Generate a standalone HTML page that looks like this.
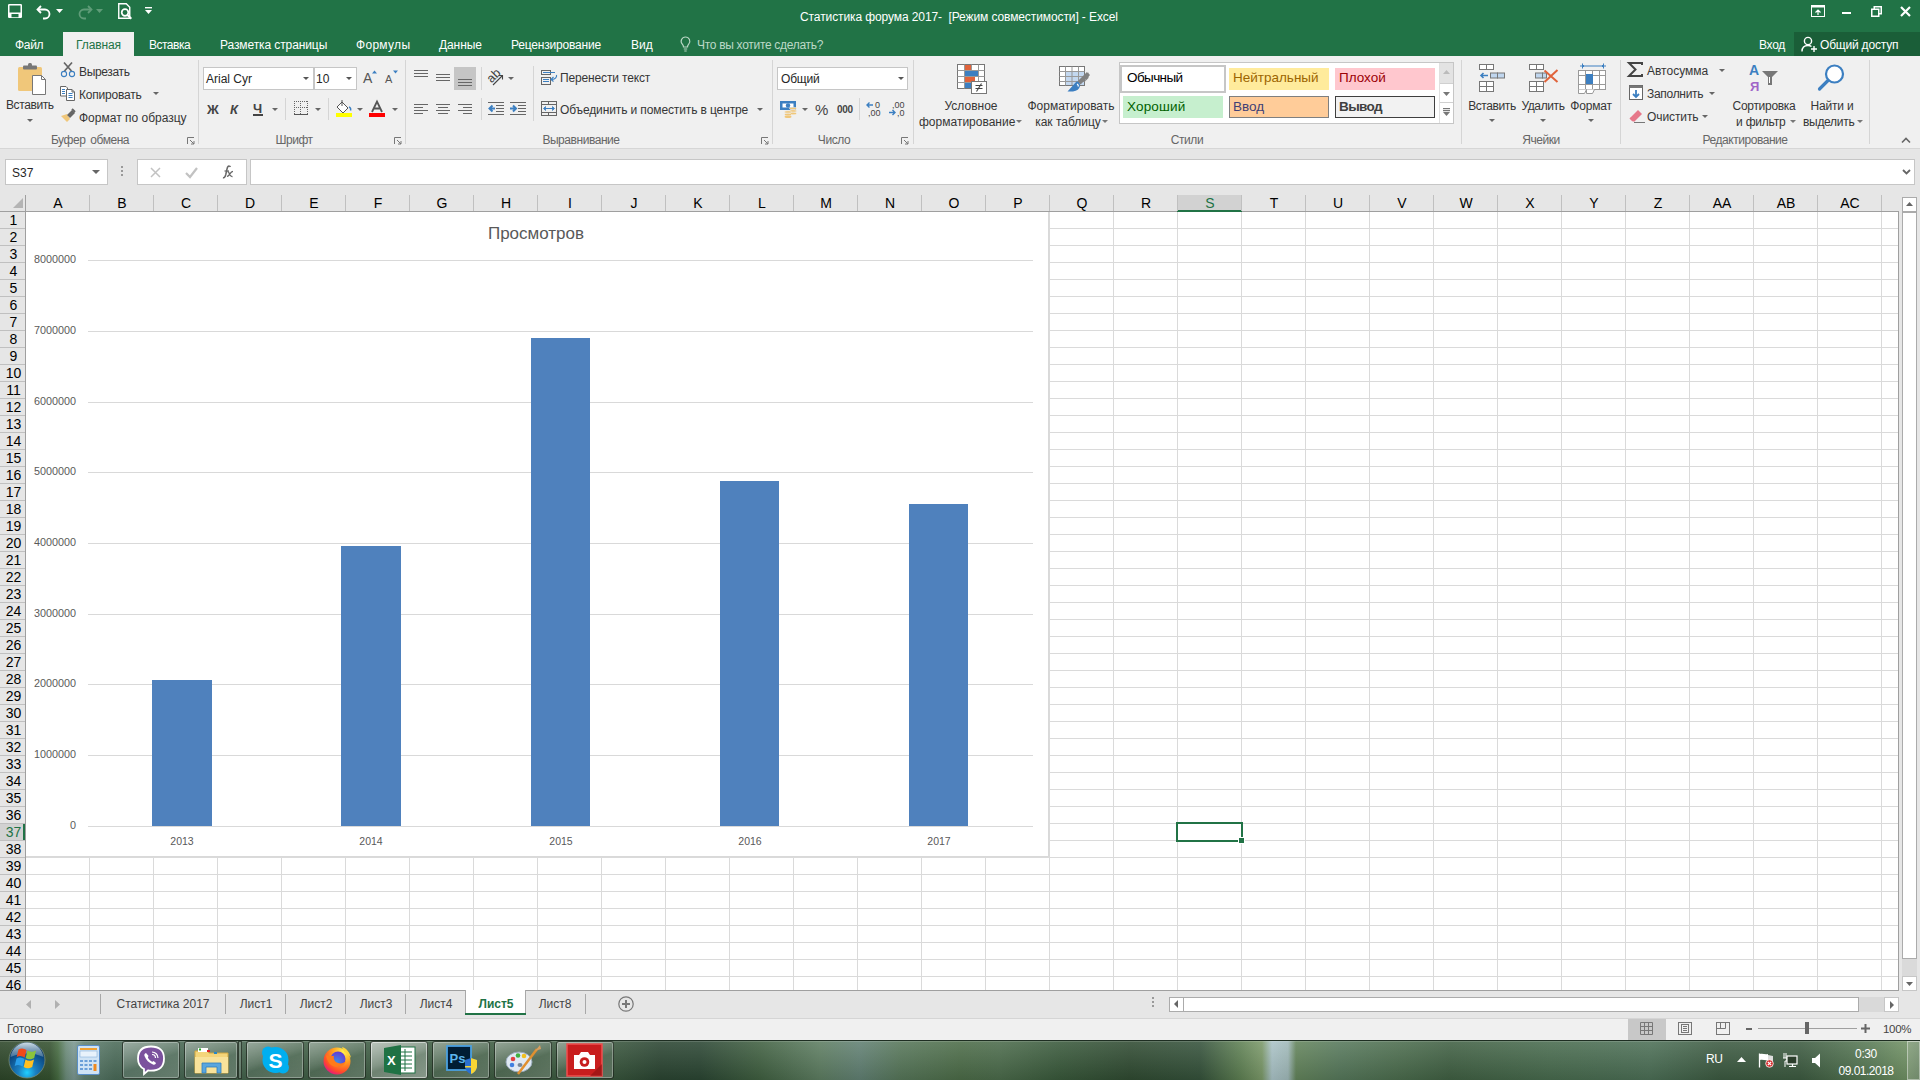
<!DOCTYPE html>
<html><head><meta charset="utf-8"><style>
*{margin:0;padding:0;box-sizing:border-box}
html,body{width:1920px;height:1080px;overflow:hidden;background:#f0f0f0;font-family:"Liberation Sans",sans-serif}
.a{position:absolute}
.t{position:absolute;white-space:pre;line-height:1.15}
svg{overflow:visible}
</style></head><body>
<div class="a" style="left:0px;top:0px;width:1920px;height:56px;background:#217346"></div>
<svg class="a" style="left:8px;top:4px" width="14" height="14" viewBox="0 0 14 14"><rect x="0.75" y="0.75" width="12.5" height="12.5" fill="none" stroke="#fff" stroke-width="1.5" rx="0.5"/><rect x="0.75" y="8.5" width="12.5" height="4.75" fill="#fff"/><rect x="3.5" y="10" width="7" height="3.25" fill="#217346"/></svg>
<svg class="a" style="left:36px;top:4px" width="16" height="14" viewBox="0 0 16 14"><path d="M5 2 L1.5 5.5 L5 9" fill="none" stroke="#fff" stroke-width="1.8"/><path d="M2 5.5 H9 A4.5 4.5 0 0 1 9 14.5 H7" fill="none" stroke="#fff" stroke-width="1.8"/></svg>
<svg class="a" style="left:56px;top:9px" width="7" height="4" viewBox="0 0 7 4"><path d="M0 0h7l-3.5 4z" fill="#fff"/></svg>
<svg class="a" style="left:77px;top:4px" width="16" height="14" viewBox="0 0 16 14"><path d="M11 2 L14.5 5.5 L11 9" fill="none" stroke="#5f9c78" stroke-width="1.8"/><path d="M14 5.5 H7 A4.5 4.5 0 0 0 7 14.5 H9" fill="none" stroke="#5f9c78" stroke-width="1.8"/></svg>
<svg class="a" style="left:96px;top:9px" width="7" height="4" viewBox="0 0 7 4"><path d="M0 0h7l-3.5 4z" fill="#5f9c78"/></svg>
<svg class="a" style="left:118px;top:3px" width="15" height="17" viewBox="0 0 15 17"><path d="M0.75 0.75h7.5l3.5 3.5v11H0.75z" fill="none" stroke="#fff" stroke-width="1.4"/><circle cx="7" cy="9.5" r="3.3" fill="none" stroke="#fff" stroke-width="1.7"/><path d="M9.3 11.8l4 4" stroke="#fff" stroke-width="2"/></svg>
<svg class="a" style="left:145px;top:7px" width="7" height="9" viewBox="0 0 7 9"><rect x="0" y="0" width="7" height="1.4" fill="#fff"/><path d="M0 3h7l-3.5 4z" fill="#fff"/></svg>
<div class="t" style="left:800px;top:11px;font-size:12px;color:#fff;font-weight:normal;letter-spacing:-0.1px">Статистика форума 2017-  [Режим совместимости] - Excel</div>
<svg class="a" style="left:1811px;top:5px" width="14" height="12" viewBox="0 0 14 12"><rect x="0.5" y="0.5" width="13" height="11" fill="none" stroke="#fff"/><rect x="0.5" y="0.5" width="13" height="2" fill="#fff"/><path d="M7 10V5M4.5 7.5L7 5l2.5 2.5" fill="none" stroke="#fff" stroke-width="1.2"/></svg>
<div class="a" style="left:1842px;top:12px;width:9px;height:2px;background:#fff"></div>
<svg class="a" style="left:1871px;top:6px" width="11" height="11" viewBox="0 0 11 11"><rect x="0.75" y="3.25" width="7" height="7" fill="none" stroke="#fff" stroke-width="1.5"/><path d="M3.25 3.25V0.75h7v7H7.75" fill="none" stroke="#fff" stroke-width="1.5"/></svg>
<svg class="a" style="left:1900px;top:6px" width="11" height="11" viewBox="0 0 11 11"><path d="M1 1l9 9M10 1L1 10" stroke="#fff" stroke-width="2.2"/></svg>
<div class="a" style="left:63px;top:32px;width:71px;height:24px;background:#f0f0f0"></div>
<div class="t" style="left:15px;top:39px;font-size:12px;color:#fff;font-weight:normal;letter-spacing:-0.3px">Файл</div>
<div class="t" style="left:76px;top:39px;font-size:12px;color:#217346;font-weight:normal;letter-spacing:-0.1px">Главная</div>
<div class="t" style="left:149px;top:39px;font-size:12px;color:#fff;font-weight:normal;letter-spacing:-0.5px">Вставка</div>
<div class="t" style="left:220px;top:39px;font-size:12px;color:#fff;font-weight:normal;letter-spacing:-0.1px">Разметка страницы</div>
<div class="t" style="left:356px;top:39px;font-size:12px;color:#fff;font-weight:normal;letter-spacing:0.3px">Формулы</div>
<div class="t" style="left:439px;top:39px;font-size:12px;color:#fff;font-weight:normal;letter-spacing:-0.1px">Данные</div>
<div class="t" style="left:511px;top:39px;font-size:12px;color:#fff;font-weight:normal;letter-spacing:-0.2px">Рецензирование</div>
<div class="t" style="left:631px;top:39px;font-size:12px;color:#fff;font-weight:normal;">Вид</div>
<svg class="a" style="left:680px;top:36px" width="11" height="16" viewBox="0 0 11 16"><path d="M5.5 1A4.3 4.3 0 0 0 2.3 8.2C3.3 9.4 3.5 10 3.5 11h4c0-1 .2-1.6 1.2-2.8A4.3 4.3 0 0 0 5.5 1z" fill="none" stroke="#b9d6c4" stroke-width="1.2"/><path d="M3.8 13h3.4M4.3 15h2.4" stroke="#b9d6c4" stroke-width="1.2"/></svg>
<div class="t" style="left:697px;top:39px;font-size:12px;color:#bcd9c7;font-weight:normal;letter-spacing:-0.3px">Что вы хотите сделать?</div>
<div class="t" style="left:1759px;top:39px;font-size:12px;color:#fff;font-weight:normal;letter-spacing:-0.3px">Вход</div>
<div class="a" style="left:1794px;top:32px;width:126px;height:24px;background:#1a5e38"></div>
<svg class="a" style="left:1801px;top:36px" width="17" height="17" viewBox="0 0 17 17"><circle cx="7" cy="5" r="3.6" fill="none" stroke="#fff" stroke-width="1.4"/><path d="M1 15.5c0-4 2.6-6 6-6 1.4 0 2.6.3 3.5 1" fill="none" stroke="#fff" stroke-width="1.4"/><path d="M13 10v6M10 13h6" stroke="#fff" stroke-width="1.4"/></svg>
<div class="t" style="left:1820px;top:39px;font-size:12px;color:#fff;font-weight:normal;letter-spacing:-0.2px">Общий доступ</div>
<div class="a" style="left:0px;top:56px;width:1920px;height:92px;background:#f0f0f0"></div>
<div class="a" style="left:0px;top:148px;width:1920px;height:1px;background:#d6d6d6"></div>
<svg class="a" style="left:17px;top:63px" width="30" height="32" viewBox="0 0 30 32"><rect x="1" y="4" width="24" height="24" rx="1.5" fill="#f0c77a"/><rect x="6" y="2.5" width="14" height="4" rx="1" fill="#777"/><rect x="11" y="0" width="4" height="4" rx="1.5" fill="#777"/><path d="M15.5 12.5h9l4 4v15h-13z" fill="#fff" stroke="#777" stroke-width="1"/><path d="M24.5 12.5v4h4" fill="none" stroke="#777"/></svg>
<div class="t" style="left:6px;top:99px;font-size:12px;color:#363636;font-weight:normal;letter-spacing:-0.4px">Вставить</div>
<svg class="a" style="left:27px;top:119px" width="6" height="3" viewBox="0 0 6 3"><path d="M0 0h6l-3 3z" fill="#666"/></svg>
<svg class="a" style="left:60px;top:61px" width="16" height="17" viewBox="0 0 16 17"><path d="M4 1.5L11.5 10M12 1.5L4.5 10" stroke="#666" stroke-width="1.7"/><circle cx="4" cy="13" r="2.6" fill="none" stroke="#3c7fc1" stroke-width="1.1"/><circle cx="12" cy="13" r="2.6" fill="none" stroke="#3c7fc1" stroke-width="1.1"/></svg>
<div class="t" style="left:79px;top:66px;font-size:12px;color:#363636;font-weight:normal;letter-spacing:-0.35px">Вырезать</div>
<svg class="a" style="left:60px;top:86px" width="16" height="15" viewBox="0 0 16 15"><path d="M0.5 0.5h5.5l1.5 1.5v8H0.5z" fill="#fff" stroke="#666"/><path d="M6.5 3.5h5.5l2.5 2.5v8.5H6.5z" fill="#fff" stroke="#666"/><path d="M12 3.5v2.5h2.5" fill="none" stroke="#666"/><path d="M2 3.5h3M2 5.5h3M2 7.5h3" stroke="#3c7fc1"/><path d="M8.5 7.5h4M8.5 9.5h4M8.5 11.5h4" stroke="#3c7fc1"/></svg>
<div class="t" style="left:79px;top:89px;font-size:12px;color:#363636;font-weight:normal;letter-spacing:-0.2px">Копировать</div>
<svg class="a" style="left:153px;top:92px" width="6" height="3" viewBox="0 0 6 3"><path d="M0 0h6l-3 3z" fill="#666"/></svg>
<svg class="a" style="left:60px;top:108px" width="17" height="15" viewBox="0 0 17 15"><path d="M1 8l6 6 3-3-3-5z" fill="#f0c77a"/><path d="M7 7l3 3 5-5-3-3z" fill="#666"/><path d="M12 1l3 3" stroke="#666" stroke-width="2"/></svg>
<div class="t" style="left:79px;top:112px;font-size:12px;color:#363636;font-weight:normal;">Формат по образцу</div>
<div class="t" style="left:-110px;width:400px;text-align:center;top:134px;font-size:12px;color:#666;font-weight:normal;letter-spacing:-0.45px;word-spacing:2px">Буфер обмена</div>
<svg class="a" style="left:187px;top:137px" width="8" height="8" viewBox="0 0 8 8"><path d="M0.5 7V0.5H7" fill="none" stroke="#777"/><path d="M3 3l4 4M7 4v3H4" fill="none" stroke="#777"/></svg>
<div class="a" style="left:198px;top:60px;width:1px;height:84px;background:#d5d5d5"></div>
<div class="a" style="left:203px;top:67px;width:111px;height:23px;background:#fff;border:1px solid #c6c6c6"></div>
<div class="t" style="left:206px;top:73px;font-size:12px;color:#262626;font-weight:normal;letter-spacing:0px">Arial Cyr</div>
<svg class="a" style="left:303px;top:77px" width="6" height="3" viewBox="0 0 6 3"><path d="M0 0h6l-3 3z" fill="#555"/></svg>
<div class="a" style="left:314px;top:67px;width:43px;height:23px;background:#fff;border:1px solid #c6c6c6"></div>
<div class="t" style="left:316px;top:73px;font-size:12px;color:#262626;font-weight:normal;">10</div>
<svg class="a" style="left:346px;top:77px" width="6" height="3" viewBox="0 0 6 3"><path d="M0 0h6l-3 3z" fill="#555"/></svg>
<svg class="a" style="left:363px;top:70px" width="14" height="14" viewBox="0 0 14 14"><text x="0" y="13" font-family="Liberation Sans" font-size="14" fill="#555">A</text><path d="M9 3.5l2.5-3 2.5 3z" fill="#3c7fc1"/></svg>
<svg class="a" style="left:385px;top:70px" width="14" height="14" viewBox="0 0 14 14"><text x="0" y="13" font-family="Liberation Sans" font-size="11" fill="#555">A</text><path d="M8 0.5h5l-2.5 3z" fill="#3c7fc1"/></svg>
<div class="t" style="left:207px;top:103px;font-size:13px;color:#444;font-weight:bold;">Ж</div>
<div class="t" style="left:230px;top:103px;font-size:13px;color:#444;font-weight:bold;font-style:italic">К</div>
<div class="t" style="left:253px;top:102px;font-size:13px;color:#444;font-weight:bold;">Ч</div>
<div class="a" style="left:253px;top:114px;width:10px;height:1.5px;background:#444"></div>
<svg class="a" style="left:272px;top:108px" width="6" height="3" viewBox="0 0 6 3"><path d="M0 0h6l-3 3z" fill="#666"/></svg>
<div class="a" style="left:285px;top:98px;width:1px;height:22px;background:#d5d5d5"></div>
<svg class="a" style="left:294px;top:101px" width="14" height="14" viewBox="0 0 14 14"><path d="M0 0.5h14M0 6.5h14M0.5 0v13M6.5 0v13M13.5 0v13" stroke="#666" stroke-dasharray="1 1" fill="none"/><path d="M0 13.5h14" stroke="#555" stroke-width="1"/></svg>
<svg class="a" style="left:315px;top:108px" width="6" height="3" viewBox="0 0 6 3"><path d="M0 0h6l-3 3z" fill="#666"/></svg>
<div class="a" style="left:328px;top:98px;width:1px;height:22px;background:#d5d5d5"></div>
<svg class="a" style="left:336px;top:100px" width="18" height="17" viewBox="0 0 18 17"><path d="M6 2l6 6-5 5-6-6z" fill="#fff" stroke="#555"/><path d="M6 0v6" stroke="#555"/><path d="M13 7c1.5 0.5 2 2 1.5 3.5" fill="none" stroke="#3c7fc1" stroke-width="1.5"/><rect x="0" y="13" width="16" height="4" fill="#ffff00"/></svg>
<svg class="a" style="left:357px;top:108px" width="6" height="3" viewBox="0 0 6 3"><path d="M0 0h6l-3 3z" fill="#666"/></svg>
<svg class="a" style="left:369px;top:101px" width="16" height="16" viewBox="0 0 16 16"><path d="M3 11L8 0.5 13 11M5 7.5h6" fill="none" stroke="#555" stroke-width="1.8"/><rect x="0" y="12" width="16" height="4" fill="#f00"/></svg>
<svg class="a" style="left:392px;top:108px" width="6" height="3" viewBox="0 0 6 3"><path d="M0 0h6l-3 3z" fill="#666"/></svg>
<div class="t" style="left:94px;width:400px;text-align:center;top:134px;font-size:12px;color:#666;font-weight:normal;letter-spacing:-0.45px;word-spacing:2px">Шрифт</div>
<svg class="a" style="left:394px;top:137px" width="8" height="8" viewBox="0 0 8 8"><path d="M0.5 7V0.5H7" fill="none" stroke="#777"/><path d="M3 3l4 4M7 4v3H4" fill="none" stroke="#777"/></svg>
<div class="a" style="left:405px;top:60px;width:1px;height:84px;background:#d5d5d5"></div>
<svg class="a" style="left:414px;top:70px" width="16" height="9" viewBox="0 0 16 9"><rect x="0" y="0" width="14" height="1" fill="#666"/><rect x="0" y="3" width="14" height="1" fill="#666"/><rect x="0" y="6" width="14" height="1" fill="#666"/></svg>
<svg class="a" style="left:436px;top:74px" width="16" height="9" viewBox="0 0 16 9"><rect x="0" y="0" width="14" height="1" fill="#666"/><rect x="0" y="3" width="14" height="1" fill="#666"/><rect x="0" y="6" width="14" height="1" fill="#666"/></svg>
<div class="a" style="left:454px;top:67px;width:22px;height:23px;background:#c5c5c5"></div>
<svg class="a" style="left:458px;top:79px" width="16" height="9" viewBox="0 0 16 9"><rect x="0" y="0" width="14" height="1" fill="#666"/><rect x="0" y="3" width="14" height="1" fill="#666"/><rect x="0" y="6" width="14" height="1" fill="#666"/></svg>
<div class="a" style="left:481px;top:67px;width:1px;height:23px;background:#d5d5d5"></div>
<svg class="a" style="left:487px;top:69px" width="18" height="18" viewBox="0 0 18 18"><text x="0" y="0" font-family="Liberation Sans" font-size="12.5" fill="#444" transform="translate(4.5,14.5) rotate(-45)">ab</text><path d="M6 16L15 7" stroke="#444" stroke-width="1.1"/><path d="M11.5 6.5H15.5V10.5" fill="none" stroke="#444" stroke-width="1.1"/></svg>
<svg class="a" style="left:508px;top:77px" width="6" height="3" viewBox="0 0 6 3"><path d="M0 0h6l-3 3z" fill="#666"/></svg>
<svg class="a" style="left:414px;top:104px" width="16" height="12" viewBox="0 0 16 12"><rect x="0" y="0" width="14" height="1" fill="#666"/><rect x="0" y="3" width="9" height="1" fill="#666"/><rect x="0" y="6" width="14" height="1" fill="#666"/><rect x="0" y="9" width="9" height="1" fill="#666"/></svg>
<svg class="a" style="left:436px;top:104px" width="16" height="12" viewBox="0 0 16 12"><rect x="0" y="0" width="14" height="1" fill="#666"/><rect x="2" y="3" width="10" height="1" fill="#666"/><rect x="0" y="6" width="14" height="1" fill="#666"/><rect x="2" y="9" width="10" height="1" fill="#666"/></svg>
<svg class="a" style="left:458px;top:104px" width="16" height="12" viewBox="0 0 16 12"><rect x="0" y="0" width="14" height="1" fill="#666"/><rect x="5" y="3" width="9" height="1" fill="#666"/><rect x="0" y="6" width="14" height="1" fill="#666"/><rect x="5" y="9" width="9" height="1" fill="#666"/></svg>
<div class="a" style="left:481px;top:98px;width:1px;height:22px;background:#d5d5d5"></div>
<svg class="a" style="left:488px;top:102px" width="16" height="14" viewBox="0 0 16 14"><path d="M0 0.5h16M8 3.5h8M8 6.5h8M8 9.5h8M0 12.5h16" stroke="#666"/><path d="M7 6.5H2M4.5 3.5L1.5 6.5l3 3" fill="none" stroke="#3c7fc1" stroke-width="2"/></svg>
<svg class="a" style="left:510px;top:102px" width="16" height="14" viewBox="0 0 16 14"><path d="M0 0.5h16M8 3.5h8M8 6.5h8M8 9.5h8M0 12.5h16" stroke="#666"/><path d="M0 6.5h5M3 3.5l3 3-3 3" fill="none" stroke="#3c7fc1" stroke-width="2"/></svg>
<div class="a" style="left:533px;top:66px;width:1px;height:55px;background:#d5d5d5"></div>
<svg class="a" style="left:541px;top:69px" width="17" height="17" viewBox="0 0 17 17"><rect x="0.5" y="1.5" width="9" height="4" fill="none" stroke="#666"/><rect x="0.5" y="8.5" width="9" height="7" fill="none" stroke="#666"/><path d="M2 3.5h12M2 10.5h6M2 12.5h6" stroke="#3c7fc1"/><path d="M15.5 6c.5 2-1 4-4.5 4.5" fill="none" stroke="#3c7fc1" stroke-width="1.2"/><path d="M12.5 8l-2.5 2.5 2.5 2" fill="none" stroke="#3c7fc1" stroke-width="1.2"/></svg>
<div class="t" style="left:560px;top:72px;font-size:12px;color:#363636;font-weight:normal;letter-spacing:-0.15px">Перенести текст</div>
<svg class="a" style="left:541px;top:101px" width="16" height="16" viewBox="0 0 16 16"><rect x="0.5" y="0.5" width="15" height="14" fill="none" stroke="#666"/><path d="M0.5 3.5h15M0.5 11.5h15M7.5 0.5v3M7.5 11.5v3" stroke="#666"/><path d="M3 7.5h10" stroke="#3c7fc1"/><path d="M4.5 5.5l-2 2 2 2zM11.5 5.5l2 2-2 2z" fill="#3c7fc1" stroke="#3c7fc1" stroke-width="0.8"/></svg>
<div class="t" style="left:560px;top:104px;font-size:12px;color:#363636;font-weight:normal;letter-spacing:-0.12px">Объединить и поместить в центре</div>
<svg class="a" style="left:757px;top:108px" width="6" height="3" viewBox="0 0 6 3"><path d="M0 0h6l-3 3z" fill="#666"/></svg>
<div class="t" style="left:381px;width:400px;text-align:center;top:134px;font-size:12px;color:#666;font-weight:normal;letter-spacing:-0.45px;word-spacing:2px">Выравнивание</div>
<svg class="a" style="left:761px;top:137px" width="8" height="8" viewBox="0 0 8 8"><path d="M0.5 7V0.5H7" fill="none" stroke="#777"/><path d="M3 3l4 4M7 4v3H4" fill="none" stroke="#777"/></svg>
<div class="a" style="left:772px;top:60px;width:1px;height:84px;background:#d5d5d5"></div>
<div class="a" style="left:777px;top:67px;width:131px;height:23px;background:#fff;border:1px solid #c6c6c6"></div>
<div class="t" style="left:781px;top:73px;font-size:12px;color:#262626;font-weight:normal;letter-spacing:-0.2px">Общий</div>
<svg class="a" style="left:898px;top:77px" width="6" height="3" viewBox="0 0 6 3"><path d="M0 0h6l-3 3z" fill="#555"/></svg>
<svg class="a" style="left:780px;top:100px" width="18" height="18" viewBox="0 0 18 18"><rect x="0" y="1" width="16" height="9" fill="#3c7fc1"/><path d="M2.5 3.5h11v4h-11z" fill="#fff"/><circle cx="8" cy="5.5" r="2.2" fill="#3c7fc1"/><ellipse cx="13" cy="8.5" rx="3.5" ry="1.3" fill="#f0c77a" stroke="#f0f0f0" stroke-width="0.6"/><ellipse cx="13" cy="11" rx="3.5" ry="1.3" fill="#f0c77a" stroke="#f0f0f0" stroke-width="0.6"/><ellipse cx="13" cy="13.5" rx="3.5" ry="1.3" fill="#f0c77a" stroke="#f0f0f0" stroke-width="0.6"/><ellipse cx="8" cy="12" rx="3.5" ry="1.3" fill="#f0c77a" stroke="#f0f0f0" stroke-width="0.6"/><ellipse cx="8" cy="14.5" rx="3.5" ry="1.3" fill="#f0c77a" stroke="#f0f0f0" stroke-width="0.6"/><ellipse cx="8" cy="16.8" rx="3.5" ry="1.2" fill="#f0c77a"/></svg>
<svg class="a" style="left:802px;top:108px" width="6" height="3" viewBox="0 0 6 3"><path d="M0 0h6l-3 3z" fill="#666"/></svg>
<div class="t" style="left:815px;top:101px;font-size:15px;color:#444;font-weight:normal;">%</div>
<div class="t" style="left:837px;top:104px;font-size:10px;color:#444;font-weight:normal;letter-spacing:-0.3px;font-weight:bold">000</div>
<div class="a" style="left:859px;top:98px;width:1px;height:22px;background:#d5d5d5"></div>
<svg class="a" style="left:866px;top:101px" width="17" height="16" viewBox="0 0 17 16"><text x="9" y="7" font-family="Liberation Sans" font-size="9" fill="#444">0</text><text x="2" y="15" font-family="Liberation Sans" font-size="9" fill="#444">,00</text><path d="M1 4h6M3.5 1.5L1 4l2.5 2.5" fill="none" stroke="#3c7fc1" stroke-width="1.4"/></svg>
<svg class="a" style="left:888px;top:101px" width="17" height="16" viewBox="0 0 17 16"><text x="4" y="7" font-family="Liberation Sans" font-size="9" fill="#444">,00</text><text x="9" y="15" font-family="Liberation Sans" font-size="9" fill="#444">,0</text><path d="M1 11.5h6M4.5 9l2.5 2.5L4.5 14" fill="none" stroke="#3c7fc1" stroke-width="1.4"/></svg>
<div class="t" style="left:634px;width:400px;text-align:center;top:134px;font-size:12px;color:#666;font-weight:normal;letter-spacing:-0.45px;word-spacing:2px">Число</div>
<svg class="a" style="left:901px;top:137px" width="8" height="8" viewBox="0 0 8 8"><path d="M0.5 7V0.5H7" fill="none" stroke="#777"/><path d="M3 3l4 4M7 4v3H4" fill="none" stroke="#777"/></svg>
<div class="a" style="left:913px;top:60px;width:1px;height:84px;background:#d5d5d5"></div>
<svg class="a" style="left:957px;top:64px" width="31" height="30" viewBox="0 0 31 30"><g stroke="#777" fill="#fff"><rect x="0.5" y="0.5" width="27" height="24"/></g><path d="M0.5 6.5h27M0.5 12.5h27M0.5 18.5h27M7.5 0.5v24M14.5 0.5v24M21.5 0.5v24" stroke="#999"/><rect x="8" y="1" width="6" height="5" fill="#e0633b"/><rect x="8" y="7" width="13" height="5" fill="#3c7fc1"/><rect x="8" y="13" width="10" height="5" fill="#e0633b"/><rect x="8" y="19" width="6" height="5" fill="#3c7fc1"/><rect x="14.5" y="17.5" width="15" height="12" fill="#fff" stroke="#777"/><path d="M18.5 21.5h7M18.5 24.5h7M24.5 19.5l-5 8" stroke="#444" stroke-width="1.1"/></svg>
<div class="t" style="left:771px;width:400px;text-align:center;top:100px;font-size:12px;color:#363636;font-weight:normal;">Условное</div>
<div class="t" style="left:919px;top:116px;font-size:12px;color:#363636;font-weight:normal;">форматирование</div>
<svg class="a" style="left:1016px;top:120px" width="6" height="3" viewBox="0 0 6 3"><path d="M0 0h6l-3 3z" fill="#777"/></svg>
<svg class="a" style="left:1059px;top:66px" width="31" height="29" viewBox="0 0 31 29"><rect x="0.5" y="0.5" width="25" height="19" fill="#fff" stroke="#777"/><path d="M0.5 5.5h25M0.5 10.5h25M0.5 15.5h25M6.5 0.5v19M13 0.5v19M19.5 0.5v19" stroke="#999"/><rect x="7" y="6" width="18" height="13" fill="#bdd4ee" opacity="0.9"/><path d="M7 10.5h18M7 15.5h18M13 6v13M19.5 6v13" stroke="#999"/><path d="M29.5 7.5L20 17" stroke="#808080" stroke-width="4.5"/><path d="M29.5 6v6l-4 4z" fill="#808080"/><path d="M17.5 15.5c2 0 4 2 3.5 4.5-.5 3-3 5-7 5.5H8.5z" fill="#3c7fc1"/><path d="M18 18c1 .5 1.5 1.5 1 2.5" stroke="#fff" stroke-width="1.2" fill="none"/></svg>
<div class="t" style="left:871px;width:400px;text-align:center;top:100px;font-size:12px;color:#363636;font-weight:normal;">Форматировать</div>
<div class="t" style="left:868px;width:400px;text-align:center;top:116px;font-size:12px;color:#363636;font-weight:normal;">как таблицу</div>
<svg class="a" style="left:1102px;top:120px" width="6" height="3" viewBox="0 0 6 3"><path d="M0 0h6l-3 3z" fill="#777"/></svg>
<div class="a" style="left:1119px;top:62px;width:335px;height:62px;background:#fff;border:1px solid #c6c6c6"></div>
<div class="a" style="left:1120px;top:65px;width:106px;height:28px;background:#fff;border:2px solid #c6c6c6"></div>
<div class="t" style="left:1127px;top:70px;font-size:13.5px;color:#000;font-weight:normal;letter-spacing:-0.6px">Обычный</div>
<div class="a" style="left:1229px;top:68px;width:100px;height:22px;background:#ffeb9c"></div>
<div class="t" style="left:1233px;top:70px;font-size:13.5px;color:#9c6500;font-weight:normal;">Нейтральный</div>
<div class="a" style="left:1335px;top:68px;width:100px;height:22px;background:#ffc7ce"></div>
<div class="t" style="left:1339px;top:70px;font-size:13.5px;color:#9c0006;font-weight:normal;">Плохой</div>
<div class="a" style="left:1123px;top:96px;width:100px;height:22px;background:#c6efce"></div>
<div class="t" style="left:1127px;top:99px;font-size:13.5px;color:#006100;font-weight:normal;letter-spacing:0.15px">Хороший</div>
<div class="a" style="left:1229px;top:96px;width:100px;height:22px;background:#ffcc99;border:1px solid #7f7f7f"></div>
<div class="t" style="left:1233px;top:99px;font-size:13.5px;color:#3f3f76;font-weight:normal;">Ввод</div>
<div class="a" style="left:1335px;top:96px;width:100px;height:22px;background:#f2f2f2;border:1px solid #3f3f3f"></div>
<div class="t" style="left:1339px;top:99px;font-size:13.5px;color:#3f3f3f;font-weight:bold;letter-spacing:-0.6px">Вывод</div>
<div class="a" style="left:1439px;top:63px;width:14px;height:60px;background:#fff;border-left:1px solid #e0e0e0"></div>
<div class="a" style="left:1440px;top:63px;width:13px;height:20px;background:#e3e3e3"></div>
<svg class="a" style="left:1443px;top:70px" width="7" height="4" viewBox="0 0 7 4"><path d="M0 4h7l-3.5-4z" fill="#bbb"/></svg>
<div class="a" style="left:1440px;top:83px;width:13px;height:1px;background:#d0d0d0"></div>
<svg class="a" style="left:1443px;top:92px" width="7" height="4" viewBox="0 0 7 4"><path d="M0 0h7l-3.5 4z" fill="#777"/></svg>
<div class="a" style="left:1440px;top:102px;width:13px;height:1px;background:#d0d0d0"></div>
<svg class="a" style="left:1443px;top:108px" width="7" height="8" viewBox="0 0 7 8"><rect x="0" y="0" width="7" height="1.2" fill="#777"/><rect x="0" y="2" width="7" height="1.2" fill="#777"/><path d="M0 4h7l-3.5 4z" fill="#777"/></svg>
<div class="t" style="left:987px;width:400px;text-align:center;top:134px;font-size:12px;color:#666;font-weight:normal;letter-spacing:-0.45px;word-spacing:2px">Стили</div>
<div class="a" style="left:1461px;top:60px;width:1px;height:84px;background:#d5d5d5"></div>
<svg class="a" style="left:1479px;top:64px" width="28" height="28" viewBox="0 0 28 28"><g fill="#fff" stroke="#777"><rect x="0.5" y="0.5" width="7" height="5"/><rect x="7.5" y="0.5" width="7" height="5"/><rect x="0.5" y="17.5" width="7" height="5"/><rect x="7.5" y="17.5" width="7" height="5"/><rect x="0.5" y="22.5" width="7" height="5"/><rect x="7.5" y="22.5" width="7" height="5"/></g><g fill="#c0d6ee" stroke="#777"><rect x="11.5" y="9" width="7" height="5"/><rect x="18.5" y="9" width="7" height="5"/></g><path d="M9 11.5H2M4.5 9L2 11.5 4.5 14" fill="none" stroke="#3c7fc1" stroke-width="1.6"/></svg>
<div class="t" style="left:1292px;width:400px;text-align:center;top:100px;font-size:12px;color:#363636;font-weight:normal;letter-spacing:-0.4px">Вставить</div>
<svg class="a" style="left:1489px;top:119px" width="6" height="3" viewBox="0 0 6 3"><path d="M0 0h6l-3 3z" fill="#666"/></svg>
<svg class="a" style="left:1529px;top:64px" width="30" height="28" viewBox="0 0 30 28"><g fill="#fff" stroke="#777"><rect x="0.5" y="0.5" width="7" height="5"/><rect x="7.5" y="0.5" width="7" height="5"/><rect x="0.5" y="17.5" width="7" height="5"/><rect x="7.5" y="17.5" width="7" height="5"/><rect x="0.5" y="22.5" width="7" height="5"/><rect x="7.5" y="22.5" width="7" height="5"/></g><g fill="#c0d6ee" stroke="#777"><rect x="6.5" y="9" width="7" height="5"/><rect x="13.5" y="9" width="4" height="5"/></g></svg>
<svg class="a" style="left:1543px;top:69px" width="16" height="14" viewBox="0 0 16 14"><path d="M1.5 1.5L14.5 13M14.5 1L1.5 13" stroke="#e0633b" stroke-width="2"/></svg>
<div class="t" style="left:1343px;width:400px;text-align:center;top:100px;font-size:12px;color:#363636;font-weight:normal;letter-spacing:-0.4px">Удалить</div>
<svg class="a" style="left:1540px;top:119px" width="6" height="3" viewBox="0 0 6 3"><path d="M0 0h6l-3 3z" fill="#666"/></svg>
<svg class="a" style="left:1578px;top:63px" width="30" height="32" viewBox="0 0 30 32"><path d="M2 3h26M4.5 0.5v5M25.5 0.5v5M6 3l-2-2M6 3l-2 2M24 3l2-2M24 3l2 2" stroke="#3c7fc1" stroke-width="1"/><rect x="0.5" y="7.5" width="27" height="19" fill="#fff" stroke="#999"/><path d="M0.5 12.5h27M0.5 21.5h27M7.5 7.5v19M14.5 7.5v19M21.5 7.5v19" stroke="#999"/><rect x="8" y="11" width="7" height="10" fill="#3c7fc1"/><path d="M0.5 26.5v4h6l2-4M8.5 26.5v4h6l2-4" fill="#fff" stroke="#999"/></svg>
<div class="t" style="left:1391px;width:400px;text-align:center;top:100px;font-size:12px;color:#363636;font-weight:normal;letter-spacing:-0.2px">Формат</div>
<svg class="a" style="left:1588px;top:119px" width="6" height="3" viewBox="0 0 6 3"><path d="M0 0h6l-3 3z" fill="#666"/></svg>
<div class="t" style="left:1341px;width:400px;text-align:center;top:134px;font-size:12px;color:#666;font-weight:normal;letter-spacing:-0.45px;word-spacing:2px">Ячейки</div>
<div class="a" style="left:1620px;top:60px;width:1px;height:84px;background:#d5d5d5"></div>
<svg class="a" style="left:1628px;top:62px" width="15" height="15" viewBox="0 0 15 15"><path d="M14 3V1H1l6.5 6.5L1 14h13v-2" fill="none" stroke="#444" stroke-width="2"/></svg>
<div class="t" style="left:1647px;top:65px;font-size:12px;color:#363636;font-weight:normal;letter-spacing:0px">Автосумма</div>
<svg class="a" style="left:1719px;top:69px" width="6" height="3" viewBox="0 0 6 3"><path d="M0 0h6l-3 3z" fill="#666"/></svg>
<svg class="a" style="left:1629px;top:85px" width="15" height="15" viewBox="0 0 15 15"><rect x="0.5" y="0.5" width="13" height="14" fill="#fff" stroke="#666"/><rect x="0.5" y="0.5" width="13" height="2.5" fill="#777"/><path d="M7 5v7M4 9l3 3 3-3" fill="none" stroke="#3c7fc1" stroke-width="1.8"/></svg>
<div class="t" style="left:1647px;top:88px;font-size:12px;color:#363636;font-weight:normal;letter-spacing:-0.3px">Заполнить</div>
<svg class="a" style="left:1709px;top:92px" width="6" height="3" viewBox="0 0 6 3"><path d="M0 0h6l-3 3z" fill="#666"/></svg>
<svg class="a" style="left:1629px;top:108px" width="17" height="16" viewBox="0 0 17 16"><path d="M1 10l8-8 4 4-8 8z" fill="#e6788a"/><path d="M1 10l3 3" stroke="#e6788a" stroke-width="1.5"/><path d="M5 14.5h11" stroke="#777"/></svg>
<div class="t" style="left:1647px;top:111px;font-size:12px;color:#363636;font-weight:normal;letter-spacing:-0.1px">Очистить</div>
<svg class="a" style="left:1702px;top:115px" width="6" height="3" viewBox="0 0 6 3"><path d="M0 0h6l-3 3z" fill="#666"/></svg>
<svg class="a" style="left:1749px;top:64px" width="30" height="28" viewBox="0 0 30 28"><text x="0" y="11" font-family="Liberation Sans" font-size="14" font-weight="bold" fill="#3c7fc1">A</text><text x="1" y="27" font-family="Liberation Sans" font-size="13" font-weight="bold" fill="#a064c8">Я</text><path d="M13 7h16l-6 6v8h-4v-8z" fill="#777"/><path d="M20.5 13v6" stroke="#fff" stroke-width="1"/></svg>
<div class="t" style="left:1564px;width:400px;text-align:center;top:100px;font-size:12px;color:#363636;font-weight:normal;letter-spacing:-0.3px">Сортировка</div>
<div class="t" style="left:1736px;top:116px;font-size:12px;color:#363636;font-weight:normal;letter-spacing:-0.2px">и фильтр</div>
<svg class="a" style="left:1790px;top:120px" width="6" height="3" viewBox="0 0 6 3"><path d="M0 0h6l-3 3z" fill="#777"/></svg>
<svg class="a" style="left:1817px;top:63px" width="29" height="29" viewBox="0 0 29 29"><circle cx="17.5" cy="11" r="8.5" fill="#fff" stroke="#3c7fc1" stroke-width="2.2"/><path d="M11 17.5l-8.5 8.5" stroke="#3c7fc1" stroke-width="3.2" stroke-linecap="round"/></svg>
<div class="t" style="left:1632px;width:400px;text-align:center;top:100px;font-size:12px;color:#363636;font-weight:normal;letter-spacing:-0.2px">Найти и</div>
<div class="t" style="left:1803px;top:116px;font-size:12px;color:#363636;font-weight:normal;letter-spacing:-0.3px">выделить</div>
<svg class="a" style="left:1857px;top:120px" width="6" height="3" viewBox="0 0 6 3"><path d="M0 0h6l-3 3z" fill="#777"/></svg>
<div class="t" style="left:1545px;width:400px;text-align:center;top:134px;font-size:12px;color:#666;font-weight:normal;letter-spacing:-0.45px;word-spacing:2px">Редактирование</div>
<div class="a" style="left:1869px;top:60px;width:1px;height:84px;background:#d5d5d5"></div>
<svg class="a" style="left:1901px;top:137px" width="10" height="6" viewBox="0 0 10 6"><path d="M1 5.5L5 1.5 9 5.5" fill="none" stroke="#666" stroke-width="1.6"/></svg>
<div class="a" style="left:0px;top:149px;width:1920px;height:46px;background:#e6e6e6"></div>
<div class="a" style="left:5px;top:159px;width:103px;height:26px;background:#fff;border:1px solid #c6c6c6"></div>
<div class="t" style="left:12px;top:167px;font-size:12px;color:#262626;font-weight:normal;letter-spacing:0px">S37</div>
<svg class="a" style="left:92px;top:170px" width="8" height="4" viewBox="0 0 8 4"><path d="M0 0h8l-4 4z" fill="#666"/></svg>
<svg class="a" style="left:121px;top:166px" width="3" height="10" viewBox="0 0 3 10"><rect x="0" y="0" width="2" height="2" fill="#999"/><rect x="0" y="4" width="2" height="2" fill="#999"/><rect x="0" y="8" width="2" height="2" fill="#999"/></svg>
<div class="a" style="left:137px;top:159px;width:110px;height:26px;background:#fff;border:1px solid #c6c6c6"></div>
<svg class="a" style="left:150px;top:167px" width="11" height="11" viewBox="0 0 11 11"><path d="M1 1l9 9M10 1L1 10" stroke="#c2c2c2" stroke-width="1.5"/></svg>
<svg class="a" style="left:185px;top:167px" width="13" height="11" viewBox="0 0 13 11"><path d="M1 6l4 4 7-9" fill="none" stroke="#c2c2c2" stroke-width="2.2"/></svg>
<svg class="a" style="left:221px;top:165px" width="14" height="14" viewBox="0 0 14 14"><path d="M9.5 1.8C9 1 7.5 0.8 6.8 1.8 6.2 2.6 5.5 6 4.8 9.5 4 12.5 3.2 13 2 12.5" fill="none" stroke="#666" stroke-width="1.5"/><path d="M3.5 6h4.5" stroke="#666" stroke-width="1.2"/><path d="M6.5 6.5c1 0 1.5 1 2 2.5s1.2 2.8 3 2.5M12 6.3c-1.5 0-2.5 1.5-3.5 3S7 11.5 6 11.2" fill="none" stroke="#666" stroke-width="1.3"/></svg>
<div class="a" style="left:250px;top:159px;width:1665px;height:26px;background:#fff;border:1px solid #c6c6c6"></div>
<svg class="a" style="left:1902px;top:169px" width="9" height="6" viewBox="0 0 9 6"><path d="M1 1l3.5 3.5L8 1" fill="none" stroke="#666" stroke-width="1.8"/></svg>
<div class="a" style="left:0px;top:195px;width:1902px;height:16px;background:#e6e6e6"></div>
<div class="a" style="left:0px;top:211px;width:25px;height:779px;background:#e6e6e6"></div>
<div class="a" style="left:26px;top:212px;width:1872px;height:778px;background:#fff"></div>
<div class="a" style="left:26px;top:212px;width:1872px;height:778px;background-image:linear-gradient(to right, transparent 63px, #dadada 63px, #dadada 64px, transparent 64px),linear-gradient(to bottom, transparent 16px, #dadada 16px, #dadada 17px, transparent 17px);background-size:64px 17px;background-position:0 0"></div>
<div class="a" style="left:0px;top:211px;width:1898px;height:1px;background:#9f9f9f"></div>
<div class="a" style="left:25px;top:195px;width:1px;height:795px;background:#9f9f9f"></div>
<div class="a" style="left:1898px;top:211px;width:1px;height:780px;background:#9f9f9f"></div>
<div class="a" style="left:0px;top:990px;width:1899px;height:1px;background:#9f9f9f"></div>
<svg class="a" style="left:13px;top:198px" width="10" height="10" viewBox="0 0 10 10"><path d="M10 0V10H0z" fill="#b4b4b4"/></svg>
<div class="a" style="left:1178px;top:195px;width:63px;height:16px;background:#d2d2d2"></div>
<div class="a" style="left:1177px;top:210px;width:65px;height:2px;background:#217346"></div>
<div class="a" style="left:89px;top:195px;width:1px;height:16px;background:#c0c0c0"></div>
<div class="t" style="left:26px;top:195px;width:64px;height:16px;line-height:16px;text-align:center;font-size:14px;color:#000">A</div>
<div class="a" style="left:153px;top:195px;width:1px;height:16px;background:#c0c0c0"></div>
<div class="t" style="left:90px;top:195px;width:64px;height:16px;line-height:16px;text-align:center;font-size:14px;color:#000">B</div>
<div class="a" style="left:217px;top:195px;width:1px;height:16px;background:#c0c0c0"></div>
<div class="t" style="left:154px;top:195px;width:64px;height:16px;line-height:16px;text-align:center;font-size:14px;color:#000">C</div>
<div class="a" style="left:281px;top:195px;width:1px;height:16px;background:#c0c0c0"></div>
<div class="t" style="left:218px;top:195px;width:64px;height:16px;line-height:16px;text-align:center;font-size:14px;color:#000">D</div>
<div class="a" style="left:345px;top:195px;width:1px;height:16px;background:#c0c0c0"></div>
<div class="t" style="left:282px;top:195px;width:64px;height:16px;line-height:16px;text-align:center;font-size:14px;color:#000">E</div>
<div class="a" style="left:409px;top:195px;width:1px;height:16px;background:#c0c0c0"></div>
<div class="t" style="left:346px;top:195px;width:64px;height:16px;line-height:16px;text-align:center;font-size:14px;color:#000">F</div>
<div class="a" style="left:473px;top:195px;width:1px;height:16px;background:#c0c0c0"></div>
<div class="t" style="left:410px;top:195px;width:64px;height:16px;line-height:16px;text-align:center;font-size:14px;color:#000">G</div>
<div class="a" style="left:537px;top:195px;width:1px;height:16px;background:#c0c0c0"></div>
<div class="t" style="left:474px;top:195px;width:64px;height:16px;line-height:16px;text-align:center;font-size:14px;color:#000">H</div>
<div class="a" style="left:601px;top:195px;width:1px;height:16px;background:#c0c0c0"></div>
<div class="t" style="left:538px;top:195px;width:64px;height:16px;line-height:16px;text-align:center;font-size:14px;color:#000">I</div>
<div class="a" style="left:665px;top:195px;width:1px;height:16px;background:#c0c0c0"></div>
<div class="t" style="left:602px;top:195px;width:64px;height:16px;line-height:16px;text-align:center;font-size:14px;color:#000">J</div>
<div class="a" style="left:729px;top:195px;width:1px;height:16px;background:#c0c0c0"></div>
<div class="t" style="left:666px;top:195px;width:64px;height:16px;line-height:16px;text-align:center;font-size:14px;color:#000">K</div>
<div class="a" style="left:793px;top:195px;width:1px;height:16px;background:#c0c0c0"></div>
<div class="t" style="left:730px;top:195px;width:64px;height:16px;line-height:16px;text-align:center;font-size:14px;color:#000">L</div>
<div class="a" style="left:857px;top:195px;width:1px;height:16px;background:#c0c0c0"></div>
<div class="t" style="left:794px;top:195px;width:64px;height:16px;line-height:16px;text-align:center;font-size:14px;color:#000">M</div>
<div class="a" style="left:921px;top:195px;width:1px;height:16px;background:#c0c0c0"></div>
<div class="t" style="left:858px;top:195px;width:64px;height:16px;line-height:16px;text-align:center;font-size:14px;color:#000">N</div>
<div class="a" style="left:985px;top:195px;width:1px;height:16px;background:#c0c0c0"></div>
<div class="t" style="left:922px;top:195px;width:64px;height:16px;line-height:16px;text-align:center;font-size:14px;color:#000">O</div>
<div class="a" style="left:1049px;top:195px;width:1px;height:16px;background:#c0c0c0"></div>
<div class="t" style="left:986px;top:195px;width:64px;height:16px;line-height:16px;text-align:center;font-size:14px;color:#000">P</div>
<div class="a" style="left:1113px;top:195px;width:1px;height:16px;background:#c0c0c0"></div>
<div class="t" style="left:1050px;top:195px;width:64px;height:16px;line-height:16px;text-align:center;font-size:14px;color:#000">Q</div>
<div class="a" style="left:1177px;top:195px;width:1px;height:16px;background:#c0c0c0"></div>
<div class="t" style="left:1114px;top:195px;width:64px;height:16px;line-height:16px;text-align:center;font-size:14px;color:#000">R</div>
<div class="a" style="left:1241px;top:195px;width:1px;height:16px;background:#c0c0c0"></div>
<div class="t" style="left:1178px;top:195px;width:64px;height:16px;line-height:16px;text-align:center;font-size:14px;color:#217346">S</div>
<div class="a" style="left:1305px;top:195px;width:1px;height:16px;background:#c0c0c0"></div>
<div class="t" style="left:1242px;top:195px;width:64px;height:16px;line-height:16px;text-align:center;font-size:14px;color:#000">T</div>
<div class="a" style="left:1369px;top:195px;width:1px;height:16px;background:#c0c0c0"></div>
<div class="t" style="left:1306px;top:195px;width:64px;height:16px;line-height:16px;text-align:center;font-size:14px;color:#000">U</div>
<div class="a" style="left:1433px;top:195px;width:1px;height:16px;background:#c0c0c0"></div>
<div class="t" style="left:1370px;top:195px;width:64px;height:16px;line-height:16px;text-align:center;font-size:14px;color:#000">V</div>
<div class="a" style="left:1497px;top:195px;width:1px;height:16px;background:#c0c0c0"></div>
<div class="t" style="left:1434px;top:195px;width:64px;height:16px;line-height:16px;text-align:center;font-size:14px;color:#000">W</div>
<div class="a" style="left:1561px;top:195px;width:1px;height:16px;background:#c0c0c0"></div>
<div class="t" style="left:1498px;top:195px;width:64px;height:16px;line-height:16px;text-align:center;font-size:14px;color:#000">X</div>
<div class="a" style="left:1625px;top:195px;width:1px;height:16px;background:#c0c0c0"></div>
<div class="t" style="left:1562px;top:195px;width:64px;height:16px;line-height:16px;text-align:center;font-size:14px;color:#000">Y</div>
<div class="a" style="left:1689px;top:195px;width:1px;height:16px;background:#c0c0c0"></div>
<div class="t" style="left:1626px;top:195px;width:64px;height:16px;line-height:16px;text-align:center;font-size:14px;color:#000">Z</div>
<div class="a" style="left:1753px;top:195px;width:1px;height:16px;background:#c0c0c0"></div>
<div class="t" style="left:1690px;top:195px;width:64px;height:16px;line-height:16px;text-align:center;font-size:14px;color:#000">AA</div>
<div class="a" style="left:1817px;top:195px;width:1px;height:16px;background:#c0c0c0"></div>
<div class="t" style="left:1754px;top:195px;width:64px;height:16px;line-height:16px;text-align:center;font-size:14px;color:#000">AB</div>
<div class="a" style="left:1881px;top:195px;width:1px;height:16px;background:#c0c0c0"></div>
<div class="t" style="left:1818px;top:195px;width:64px;height:16px;line-height:16px;text-align:center;font-size:14px;color:#000">AC</div>
<div class="a" style="left:0px;top:228px;width:25px;height:1px;background:#c0c0c0"></div>
<div class="t" style="left:1px;top:212px;width:25px;height:16px;line-height:17px;text-align:center;font-size:14px;color:#000">1</div>
<div class="a" style="left:0px;top:245px;width:25px;height:1px;background:#c0c0c0"></div>
<div class="t" style="left:1px;top:229px;width:25px;height:16px;line-height:17px;text-align:center;font-size:14px;color:#000">2</div>
<div class="a" style="left:0px;top:262px;width:25px;height:1px;background:#c0c0c0"></div>
<div class="t" style="left:1px;top:246px;width:25px;height:16px;line-height:17px;text-align:center;font-size:14px;color:#000">3</div>
<div class="a" style="left:0px;top:279px;width:25px;height:1px;background:#c0c0c0"></div>
<div class="t" style="left:1px;top:263px;width:25px;height:16px;line-height:17px;text-align:center;font-size:14px;color:#000">4</div>
<div class="a" style="left:0px;top:296px;width:25px;height:1px;background:#c0c0c0"></div>
<div class="t" style="left:1px;top:280px;width:25px;height:16px;line-height:17px;text-align:center;font-size:14px;color:#000">5</div>
<div class="a" style="left:0px;top:313px;width:25px;height:1px;background:#c0c0c0"></div>
<div class="t" style="left:1px;top:297px;width:25px;height:16px;line-height:17px;text-align:center;font-size:14px;color:#000">6</div>
<div class="a" style="left:0px;top:330px;width:25px;height:1px;background:#c0c0c0"></div>
<div class="t" style="left:1px;top:314px;width:25px;height:16px;line-height:17px;text-align:center;font-size:14px;color:#000">7</div>
<div class="a" style="left:0px;top:347px;width:25px;height:1px;background:#c0c0c0"></div>
<div class="t" style="left:1px;top:331px;width:25px;height:16px;line-height:17px;text-align:center;font-size:14px;color:#000">8</div>
<div class="a" style="left:0px;top:364px;width:25px;height:1px;background:#c0c0c0"></div>
<div class="t" style="left:1px;top:348px;width:25px;height:16px;line-height:17px;text-align:center;font-size:14px;color:#000">9</div>
<div class="a" style="left:0px;top:381px;width:25px;height:1px;background:#c0c0c0"></div>
<div class="t" style="left:1px;top:365px;width:25px;height:16px;line-height:17px;text-align:center;font-size:14px;color:#000">10</div>
<div class="a" style="left:0px;top:398px;width:25px;height:1px;background:#c0c0c0"></div>
<div class="t" style="left:1px;top:382px;width:25px;height:16px;line-height:17px;text-align:center;font-size:14px;color:#000">11</div>
<div class="a" style="left:0px;top:415px;width:25px;height:1px;background:#c0c0c0"></div>
<div class="t" style="left:1px;top:399px;width:25px;height:16px;line-height:17px;text-align:center;font-size:14px;color:#000">12</div>
<div class="a" style="left:0px;top:432px;width:25px;height:1px;background:#c0c0c0"></div>
<div class="t" style="left:1px;top:416px;width:25px;height:16px;line-height:17px;text-align:center;font-size:14px;color:#000">13</div>
<div class="a" style="left:0px;top:449px;width:25px;height:1px;background:#c0c0c0"></div>
<div class="t" style="left:1px;top:433px;width:25px;height:16px;line-height:17px;text-align:center;font-size:14px;color:#000">14</div>
<div class="a" style="left:0px;top:466px;width:25px;height:1px;background:#c0c0c0"></div>
<div class="t" style="left:1px;top:450px;width:25px;height:16px;line-height:17px;text-align:center;font-size:14px;color:#000">15</div>
<div class="a" style="left:0px;top:483px;width:25px;height:1px;background:#c0c0c0"></div>
<div class="t" style="left:1px;top:467px;width:25px;height:16px;line-height:17px;text-align:center;font-size:14px;color:#000">16</div>
<div class="a" style="left:0px;top:500px;width:25px;height:1px;background:#c0c0c0"></div>
<div class="t" style="left:1px;top:484px;width:25px;height:16px;line-height:17px;text-align:center;font-size:14px;color:#000">17</div>
<div class="a" style="left:0px;top:517px;width:25px;height:1px;background:#c0c0c0"></div>
<div class="t" style="left:1px;top:501px;width:25px;height:16px;line-height:17px;text-align:center;font-size:14px;color:#000">18</div>
<div class="a" style="left:0px;top:534px;width:25px;height:1px;background:#c0c0c0"></div>
<div class="t" style="left:1px;top:518px;width:25px;height:16px;line-height:17px;text-align:center;font-size:14px;color:#000">19</div>
<div class="a" style="left:0px;top:551px;width:25px;height:1px;background:#c0c0c0"></div>
<div class="t" style="left:1px;top:535px;width:25px;height:16px;line-height:17px;text-align:center;font-size:14px;color:#000">20</div>
<div class="a" style="left:0px;top:568px;width:25px;height:1px;background:#c0c0c0"></div>
<div class="t" style="left:1px;top:552px;width:25px;height:16px;line-height:17px;text-align:center;font-size:14px;color:#000">21</div>
<div class="a" style="left:0px;top:585px;width:25px;height:1px;background:#c0c0c0"></div>
<div class="t" style="left:1px;top:569px;width:25px;height:16px;line-height:17px;text-align:center;font-size:14px;color:#000">22</div>
<div class="a" style="left:0px;top:602px;width:25px;height:1px;background:#c0c0c0"></div>
<div class="t" style="left:1px;top:586px;width:25px;height:16px;line-height:17px;text-align:center;font-size:14px;color:#000">23</div>
<div class="a" style="left:0px;top:619px;width:25px;height:1px;background:#c0c0c0"></div>
<div class="t" style="left:1px;top:603px;width:25px;height:16px;line-height:17px;text-align:center;font-size:14px;color:#000">24</div>
<div class="a" style="left:0px;top:636px;width:25px;height:1px;background:#c0c0c0"></div>
<div class="t" style="left:1px;top:620px;width:25px;height:16px;line-height:17px;text-align:center;font-size:14px;color:#000">25</div>
<div class="a" style="left:0px;top:653px;width:25px;height:1px;background:#c0c0c0"></div>
<div class="t" style="left:1px;top:637px;width:25px;height:16px;line-height:17px;text-align:center;font-size:14px;color:#000">26</div>
<div class="a" style="left:0px;top:670px;width:25px;height:1px;background:#c0c0c0"></div>
<div class="t" style="left:1px;top:654px;width:25px;height:16px;line-height:17px;text-align:center;font-size:14px;color:#000">27</div>
<div class="a" style="left:0px;top:687px;width:25px;height:1px;background:#c0c0c0"></div>
<div class="t" style="left:1px;top:671px;width:25px;height:16px;line-height:17px;text-align:center;font-size:14px;color:#000">28</div>
<div class="a" style="left:0px;top:704px;width:25px;height:1px;background:#c0c0c0"></div>
<div class="t" style="left:1px;top:688px;width:25px;height:16px;line-height:17px;text-align:center;font-size:14px;color:#000">29</div>
<div class="a" style="left:0px;top:721px;width:25px;height:1px;background:#c0c0c0"></div>
<div class="t" style="left:1px;top:705px;width:25px;height:16px;line-height:17px;text-align:center;font-size:14px;color:#000">30</div>
<div class="a" style="left:0px;top:738px;width:25px;height:1px;background:#c0c0c0"></div>
<div class="t" style="left:1px;top:722px;width:25px;height:16px;line-height:17px;text-align:center;font-size:14px;color:#000">31</div>
<div class="a" style="left:0px;top:755px;width:25px;height:1px;background:#c0c0c0"></div>
<div class="t" style="left:1px;top:739px;width:25px;height:16px;line-height:17px;text-align:center;font-size:14px;color:#000">32</div>
<div class="a" style="left:0px;top:772px;width:25px;height:1px;background:#c0c0c0"></div>
<div class="t" style="left:1px;top:756px;width:25px;height:16px;line-height:17px;text-align:center;font-size:14px;color:#000">33</div>
<div class="a" style="left:0px;top:789px;width:25px;height:1px;background:#c0c0c0"></div>
<div class="t" style="left:1px;top:773px;width:25px;height:16px;line-height:17px;text-align:center;font-size:14px;color:#000">34</div>
<div class="a" style="left:0px;top:806px;width:25px;height:1px;background:#c0c0c0"></div>
<div class="t" style="left:1px;top:790px;width:25px;height:16px;line-height:17px;text-align:center;font-size:14px;color:#000">35</div>
<div class="a" style="left:0px;top:823px;width:25px;height:1px;background:#c0c0c0"></div>
<div class="t" style="left:1px;top:807px;width:25px;height:16px;line-height:17px;text-align:center;font-size:14px;color:#000">36</div>
<div class="a" style="left:0px;top:840px;width:25px;height:1px;background:#c0c0c0"></div>
<div class="t" style="left:1px;top:824px;width:25px;height:16px;line-height:17px;text-align:center;font-size:14px;color:#217346">37</div>
<div class="a" style="left:0px;top:857px;width:25px;height:1px;background:#c0c0c0"></div>
<div class="t" style="left:1px;top:841px;width:25px;height:16px;line-height:17px;text-align:center;font-size:14px;color:#000">38</div>
<div class="a" style="left:0px;top:874px;width:25px;height:1px;background:#c0c0c0"></div>
<div class="t" style="left:1px;top:858px;width:25px;height:16px;line-height:17px;text-align:center;font-size:14px;color:#000">39</div>
<div class="a" style="left:0px;top:891px;width:25px;height:1px;background:#c0c0c0"></div>
<div class="t" style="left:1px;top:875px;width:25px;height:16px;line-height:17px;text-align:center;font-size:14px;color:#000">40</div>
<div class="a" style="left:0px;top:908px;width:25px;height:1px;background:#c0c0c0"></div>
<div class="t" style="left:1px;top:892px;width:25px;height:16px;line-height:17px;text-align:center;font-size:14px;color:#000">41</div>
<div class="a" style="left:0px;top:925px;width:25px;height:1px;background:#c0c0c0"></div>
<div class="t" style="left:1px;top:909px;width:25px;height:16px;line-height:17px;text-align:center;font-size:14px;color:#000">42</div>
<div class="a" style="left:0px;top:942px;width:25px;height:1px;background:#c0c0c0"></div>
<div class="t" style="left:1px;top:926px;width:25px;height:16px;line-height:17px;text-align:center;font-size:14px;color:#000">43</div>
<div class="a" style="left:0px;top:959px;width:25px;height:1px;background:#c0c0c0"></div>
<div class="t" style="left:1px;top:943px;width:25px;height:16px;line-height:17px;text-align:center;font-size:14px;color:#000">44</div>
<div class="a" style="left:0px;top:976px;width:25px;height:1px;background:#c0c0c0"></div>
<div class="t" style="left:1px;top:960px;width:25px;height:16px;line-height:17px;text-align:center;font-size:14px;color:#000">45</div>

<div class="t" style="left:1px;top:977px;width:25px;height:16px;line-height:17px;text-align:center;font-size:14px;color:#000">46</div>
<div class="a" style="left:0px;top:824px;width:25px;height:16px;background:#d2d2d2"></div>
<div class="t" style="left:1px;top:824px;width:25px;height:16px;line-height:17px;text-align:center;font-size:14px;color:#217346">37</div>
<div class="a" style="left:23px;top:824px;width:2px;height:16px;background:#217346"></div>
<div class="a" style="left:1176px;top:822px;width:67px;height:20px;border:2px solid #217346"></div>
<div class="a" style="left:1238px;top:837px;width:7px;height:7px;background:#217346;border:1px solid #fff"></div>
<div class="a" style="left:26px;top:212px;width:1023px;height:645px;background:#fff;border-right:1px solid #d9d9d9;border-bottom:1px solid #d9d9d9"></div>
<div class="t" style="left:336px;width:400px;text-align:center;top:224px;font-size:17px;color:#595959;font-weight:normal;">Просмотров</div>
<div class="a" style="left:88px;top:826px;width:945px;height:1px;background:#d9d9d9"></div>
<div class="t" style="left:0px;width:76px;text-align:right;top:819px;font-size:10.8px;color:#595959">0</div>
<div class="a" style="left:88px;top:755px;width:945px;height:1px;background:#d9d9d9"></div>
<div class="t" style="left:0px;width:76px;text-align:right;top:748px;font-size:10.8px;color:#595959">1000000</div>
<div class="a" style="left:88px;top:684px;width:945px;height:1px;background:#d9d9d9"></div>
<div class="t" style="left:0px;width:76px;text-align:right;top:677px;font-size:10.8px;color:#595959">2000000</div>
<div class="a" style="left:88px;top:614px;width:945px;height:1px;background:#d9d9d9"></div>
<div class="t" style="left:0px;width:76px;text-align:right;top:607px;font-size:10.8px;color:#595959">3000000</div>
<div class="a" style="left:88px;top:543px;width:945px;height:1px;background:#d9d9d9"></div>
<div class="t" style="left:0px;width:76px;text-align:right;top:536px;font-size:10.8px;color:#595959">4000000</div>
<div class="a" style="left:88px;top:472px;width:945px;height:1px;background:#d9d9d9"></div>
<div class="t" style="left:0px;width:76px;text-align:right;top:465px;font-size:10.8px;color:#595959">5000000</div>
<div class="a" style="left:88px;top:402px;width:945px;height:1px;background:#d9d9d9"></div>
<div class="t" style="left:0px;width:76px;text-align:right;top:395px;font-size:10.8px;color:#595959">6000000</div>
<div class="a" style="left:88px;top:331px;width:945px;height:1px;background:#d9d9d9"></div>
<div class="t" style="left:0px;width:76px;text-align:right;top:324px;font-size:10.8px;color:#595959">7000000</div>
<div class="a" style="left:88px;top:260px;width:945px;height:1px;background:#d9d9d9"></div>
<div class="t" style="left:0px;width:76px;text-align:right;top:253px;font-size:10.8px;color:#595959">8000000</div>
<div class="a" style="left:152px;top:680px;width:60px;height:146px;background:#4f81bd"></div>
<div class="t" style="left:-18px;width:400px;text-align:center;top:835px;font-size:10.5px;color:#595959;font-weight:normal;">2013</div>
<div class="a" style="left:341px;top:546px;width:60px;height:280px;background:#4f81bd"></div>
<div class="t" style="left:171px;width:400px;text-align:center;top:835px;font-size:10.5px;color:#595959;font-weight:normal;">2014</div>
<div class="a" style="left:531px;top:338px;width:59px;height:488px;background:#4f81bd"></div>
<div class="t" style="left:361px;width:400px;text-align:center;top:835px;font-size:10.5px;color:#595959;font-weight:normal;">2015</div>
<div class="a" style="left:720px;top:481px;width:59px;height:345px;background:#4f81bd"></div>
<div class="t" style="left:550px;width:400px;text-align:center;top:835px;font-size:10.5px;color:#595959;font-weight:normal;">2016</div>
<div class="a" style="left:909px;top:504px;width:59px;height:322px;background:#4f81bd"></div>
<div class="t" style="left:739px;width:400px;text-align:center;top:835px;font-size:10.5px;color:#595959;font-weight:normal;">2017</div>
<div class="a" style="left:1899px;top:195px;width:21px;height:796px;background:#e6e6e6"></div>
<div class="a" style="left:1902px;top:197px;width:15px;height:15px;background:#fff;border:1px solid #ababab"></div>
<svg class="a" style="left:1906px;top:202px" width="7" height="4" viewBox="0 0 7 4"><path d="M0 4h7l-3.5-4z" fill="#666"/></svg>
<div class="a" style="left:1902px;top:212px;width:15px;height:747px;background:#fff;border:1px solid #ababab"></div>
<div class="a" style="left:1902px;top:959px;width:15px;height:17px;background:#dadada"></div>
<div class="a" style="left:1902px;top:976px;width:15px;height:15px;background:#fff;border:1px solid #c6c6c6"></div>
<svg class="a" style="left:1906px;top:982px" width="7" height="4" viewBox="0 0 7 4"><path d="M0 0h7l-3.5 4z" fill="#666"/></svg>
<div class="a" style="left:0px;top:991px;width:1920px;height:27px;background:#e6e6e6"></div>
<svg class="a" style="left:26px;top:1000px" width="5" height="9" viewBox="0 0 5 9"><path d="M5 0v9L0 4.5z" fill="#b0b0b0"/></svg>
<svg class="a" style="left:55px;top:1000px" width="5" height="9" viewBox="0 0 5 9"><path d="M0 0v9l5-4.5z" fill="#b0b0b0"/></svg>
<div class="a" style="left:100px;top:994px;width:1px;height:20px;background:#a8a8a8"></div>
<div class="t" style="left:-37px;width:400px;text-align:center;top:998px;font-size:12px;color:#444;font-weight:normal;">Статистика 2017</div>
<div class="a" style="left:225px;top:994px;width:1px;height:20px;background:#a8a8a8"></div>
<div class="t" style="left:56px;width:400px;text-align:center;top:998px;font-size:12px;color:#444;font-weight:normal;">Лист1</div>
<div class="a" style="left:285px;top:994px;width:1px;height:20px;background:#a8a8a8"></div>
<div class="t" style="left:116px;width:400px;text-align:center;top:998px;font-size:12px;color:#444;font-weight:normal;">Лист2</div>
<div class="a" style="left:345px;top:994px;width:1px;height:20px;background:#a8a8a8"></div>
<div class="t" style="left:176px;width:400px;text-align:center;top:998px;font-size:12px;color:#444;font-weight:normal;">Лист3</div>
<div class="a" style="left:405px;top:994px;width:1px;height:20px;background:#a8a8a8"></div>
<div class="t" style="left:236px;width:400px;text-align:center;top:998px;font-size:12px;color:#444;font-weight:normal;">Лист4</div>
<div class="a" style="left:465px;top:990px;width:61px;height:25px;background:#fff;border-left:1px solid #a8a8a8;border-right:1px solid #a8a8a8"></div>
<div class="a" style="left:465px;top:1013px;width:61px;height:2px;background:#217346"></div>
<div class="t" style="left:296px;width:400px;text-align:center;top:998px;font-size:12px;color:#217346;font-weight:bold;">Лист5</div>
<div class="t" style="left:355px;width:400px;text-align:center;top:998px;font-size:12px;color:#444;font-weight:normal;">Лист8</div>
<div class="a" style="left:585px;top:994px;width:1px;height:20px;background:#a8a8a8"></div>
<svg class="a" style="left:618px;top:996px" width="16" height="16" viewBox="0 0 16 16"><circle cx="8" cy="8" r="7.2" fill="none" stroke="#777" stroke-width="1.2"/><path d="M8 4v8M4 8h8" stroke="#777" stroke-width="2"/></svg>
<svg class="a" style="left:1152px;top:997px" width="2" height="11" viewBox="0 0 2 11"><rect x="0" y="0" width="2" height="2" fill="#999"/><rect x="0" y="4" width="2" height="2" fill="#999"/><rect x="0" y="8" width="2" height="2" fill="#999"/></svg>
<div class="a" style="left:1169px;top:997px;width:15px;height:15px;background:#fff;border:1px solid #ababab"></div>
<svg class="a" style="left:1174px;top:1000px" width="4" height="8" viewBox="0 0 4 8"><path d="M4 0v8L0 4z" fill="#666"/></svg>
<div class="a" style="left:1183px;top:997px;width:676px;height:15px;background:#fff;border:1px solid #ababab"></div>
<div class="a" style="left:1859px;top:997px;width:25px;height:15px;background:#d9d9d9"></div>
<div class="a" style="left:1884px;top:997px;width:15px;height:15px;background:#fff;border:1px solid #c6c6c6"></div>
<svg class="a" style="left:1890px;top:1001px" width="4" height="8" viewBox="0 0 4 8"><path d="M0 0v8l4-4z" fill="#666"/></svg>
<div class="a" style="left:0px;top:1018px;width:1920px;height:1px;background:#d5d5d5"></div>
<div class="a" style="left:0px;top:1019px;width:1920px;height:21px;background:#f0f0f0"></div>
<div class="t" style="left:7px;top:1023px;font-size:12px;color:#444;font-weight:normal;letter-spacing:-0.15px">Готово</div>
<div class="a" style="left:1628px;top:1019px;width:38px;height:21px;background:#c8c8c8"></div>
<svg class="a" style="left:1640px;top:1022px" width="13" height="13" viewBox="0 0 13 13"><path d="M0.5 0.5h12v12h-12zM0.5 4.5h12M0.5 8.5h12M4.5 0.5v12M8.5 0.5v12" fill="none" stroke="#777"/></svg>
<svg class="a" style="left:1678px;top:1022px" width="14" height="13" viewBox="0 0 14 13"><rect x="0.5" y="0.5" width="13" height="12" fill="none" stroke="#777"/><rect x="3.5" y="2.5" width="7" height="8" fill="none" stroke="#777"/><path d="M5 4.5h4M5 6.5h4M5 8.5h4" stroke="#777"/></svg>
<svg class="a" style="left:1716px;top:1022px" width="14" height="13" viewBox="0 0 14 13"><rect x="0.5" y="0.5" width="13" height="12" fill="none" stroke="#777"/><path d="M0.5 6.5h9V0.5M4.5 0.5v6" fill="none" stroke="#777"/></svg>
<div class="a" style="left:1746px;top:1028px;width:6px;height:2px;background:#666"></div>
<div class="a" style="left:1758px;top:1028px;width:99px;height:1px;background:#a0a0a0"></div>
<div class="a" style="left:1805px;top:1022px;width:4px;height:12px;background:#666"></div>
<svg class="a" style="left:1861px;top:1024px" width="9" height="9" viewBox="0 0 9 9"><path d="M4.5 0v9M0 4.5h9" stroke="#666" stroke-width="2"/></svg>
<div class="t" style="left:1883px;top:1023px;font-size:11.5px;color:#444;font-weight:normal;letter-spacing:-0.3px">100%</div>
<div class="a" style="left:0px;top:1040px;width:1920px;height:40px;background:linear-gradient(90deg,#2c4528 0px,#33502e 50px,#456a40 58px,#6a8a78 66px,#7a9690 74px,#5f7f6f 84px,#4a6a58 115px,#3f5e45 300px,#3b593e 600px,#2a4431 660px,#2a4532 700px,#3f5f40 760px,#5c7c60 820px,#607f72 860px,#557558 900px,#4b6b47 960px,#4a6a4a 1000px,#38583a 1060px,#2f4a31 1130px,#34513a 1200px,#5d7f52 1240px,#7a9868 1262px,#a9c2c6 1272px,#9fb8b8 1288px,#62835a 1296px,#55775a 1340px,#4a6b4c 1400px,#3f5f42 1450px,#476a4d 1550px,#4b6e55 1650px,#3b5940 1720px,#3c5a40 1800px,#587a55 1870px,#6e8f62 1905px,#5f7f58 1920px)"></div>
<div class="a" style="left:0px;top:1040px;width:1920px;height:1px;background:#1e2e22"></div>
<div class="a" style="left:0px;top:1041px;width:1920px;height:1px;background:rgba(255,255,255,0.25)"></div>
<div class="a" style="left:0px;top:1042px;width:1920px;height:38px;background:linear-gradient(180deg,rgba(255,255,255,0.12),rgba(0,0,0,0.1))"></div>
<svg class="a" style="left:8px;top:1041px" width="38" height="38" viewBox="0 0 38 38"><defs><radialGradient id="orb" cx="50%" cy="85%" r="70%"><stop offset="0" stop-color="#20d0ff"/><stop offset="0.35" stop-color="#1a7fc0"/><stop offset="0.8" stop-color="#0d4f8a"/><stop offset="1" stop-color="#0a3a6a"/></radialGradient><linearGradient id="gls" x1="0" y1="0" x2="0" y2="1"><stop offset="0" stop-color="#d8e6ee" stop-opacity="0.95"/><stop offset="1" stop-color="#6a90b0" stop-opacity="0.6"/></linearGradient></defs><circle cx="19" cy="19" r="18" fill="url(#orb)" stroke="#7a8a70" stroke-width="0.8"/><path d="M2.5 16C4 7 11 1.5 19 1.5S34 7 35.5 16C30 13.5 25 12.5 19 12.5S8 13.5 2.5 16z" fill="url(#gls)"/><path d="M10.5 8.5c3-1.5 5.5-1 8 .5l-1.8 7.5c-2.5-1.5-5-2-8-.5z" fill="#f04a1a"/><path d="M19.5 9.5c2.5 1.5 5 2 8.5 0l-1.8 7.5c-3.5 2-6 1.5-8.5 0z" fill="#8cc43a"/><path d="M8.5 17.5c3-1.5 5.5-1 8 .5l-1.8 7.5c-2.5-1.5-5-2-8-.5z" fill="#2a9ee8"/><path d="M17.5 18.5c2.5 1.5 5 2 8.5 0l-1.8 7.5c-3.5 2-6 1.5-8.5 0z" fill="#ffc020"/></svg>
<svg class="a" style="left:77px;top:1045px" width="23" height="30" viewBox="0 0 23 30"><rect x="0.5" y="0.5" width="22" height="29" rx="1.5" fill="#cfe3f5" stroke="#5a8fc8"/><rect x="3" y="3" width="17" height="2" fill="#f0a030"/><rect x="3" y="6" width="17" height="6" fill="#e8f2fb" stroke="#7aa7d6" stroke-width="0.5"/><g fill="#6a9fd8"><rect x="3" y="15" width="3" height="2"/><rect x="7.5" y="15" width="3" height="2"/><rect x="12" y="15" width="3" height="2"/><rect x="16.5" y="15" width="3" height="2"/><rect x="3" y="19" width="3" height="2"/><rect x="7.5" y="19" width="3" height="2"/><rect x="12" y="19" width="3" height="2"/><rect x="3" y="23" width="3" height="2"/><rect x="7.5" y="23" width="3" height="2"/><rect x="12" y="23" width="3" height="2"/></g><rect x="16.5" y="19" width="3" height="7" fill="#f08a20"/></svg>
<div class="a" style="left:122px;top:1041px;width:58px;height:38px;border:1px solid rgba(20,30,20,0.7);border-radius:3px;background:linear-gradient(160deg,rgba(255,255,255,0.38) 0%,rgba(255,255,255,0.15) 45%,rgba(255,255,255,0.08) 55%,rgba(255,255,255,0.2) 100%);box-shadow:inset 0 0 0 1px rgba(255,255,255,0.3)"></div>
<div class="a" style="left:184px;top:1041px;width:54px;height:38px;border:1px solid rgba(20,30,20,0.7);border-radius:3px;background:linear-gradient(160deg,rgba(255,255,255,0.38) 0%,rgba(255,255,255,0.15) 45%,rgba(255,255,255,0.08) 55%,rgba(255,255,255,0.2) 100%);box-shadow:inset 0 0 0 1px rgba(255,255,255,0.3)"></div>
<div class="a" style="left:246px;top:1041px;width:58px;height:38px;border:1px solid rgba(20,30,20,0.7);border-radius:3px;background:linear-gradient(160deg,rgba(255,255,255,0.38) 0%,rgba(255,255,255,0.15) 45%,rgba(255,255,255,0.08) 55%,rgba(255,255,255,0.2) 100%);box-shadow:inset 0 0 0 1px rgba(255,255,255,0.3)"></div>
<div class="a" style="left:308px;top:1041px;width:58px;height:38px;border:1px solid rgba(20,30,20,0.7);border-radius:3px;background:linear-gradient(160deg,rgba(255,255,255,0.38) 0%,rgba(255,255,255,0.15) 45%,rgba(255,255,255,0.08) 55%,rgba(255,255,255,0.2) 100%);box-shadow:inset 0 0 0 1px rgba(255,255,255,0.3)"></div>
<div class="a" style="left:370px;top:1041px;width:58px;height:38px;border:1px solid rgba(20,30,20,0.7);border-radius:3px;background:linear-gradient(160deg,rgba(255,255,255,0.6) 0%,rgba(255,255,255,0.35) 45%,rgba(255,255,255,0.25) 55%,rgba(255,255,255,0.4) 100%);box-shadow:inset 0 0 0 1px rgba(255,255,255,0.5)"></div>
<div class="a" style="left:432px;top:1041px;width:58px;height:38px;border:1px solid rgba(20,30,20,0.7);border-radius:3px;background:linear-gradient(160deg,rgba(255,255,255,0.38) 0%,rgba(255,255,255,0.15) 45%,rgba(255,255,255,0.08) 55%,rgba(255,255,255,0.2) 100%);box-shadow:inset 0 0 0 1px rgba(255,255,255,0.3)"></div>
<div class="a" style="left:494px;top:1041px;width:58px;height:38px;border:1px solid rgba(20,30,20,0.7);border-radius:3px;background:linear-gradient(160deg,rgba(255,255,255,0.38) 0%,rgba(255,255,255,0.15) 45%,rgba(255,255,255,0.08) 55%,rgba(255,255,255,0.2) 100%);box-shadow:inset 0 0 0 1px rgba(255,255,255,0.3)"></div>
<div class="a" style="left:556px;top:1041px;width:58px;height:38px;border:1px solid rgba(20,30,20,0.7);border-radius:3px;background:linear-gradient(160deg,rgba(255,255,255,0.38) 0%,rgba(255,255,255,0.15) 45%,rgba(255,255,255,0.08) 55%,rgba(255,255,255,0.2) 100%);box-shadow:inset 0 0 0 1px rgba(255,255,255,0.3)"></div>
<div class="a" style="left:238px;top:1041px;width:4px;height:38px;border:1px solid rgba(20,30,20,0.7);background:rgba(255,255,255,0.2)"></div>
<svg class="a" style="left:136px;top:1045px" width="30" height="31" viewBox="0 0 30 31"><path d="M15 1.5C7 1.5 2 5.5 2 13.5c0 5 2 8.5 6 10.5v5l4-3.5c1 .1 2 .2 3 .2 8 0 13-4 13-12.2S23 1.5 15 1.5z" fill="#7b519d" stroke="#fff" stroke-width="1.8"/><path d="M10 8c-1.5 0.5-2 1.5-1.5 3 1.5 4 4.5 7 8.5 8.5 1.5 .5 2.5 0 3-1.5l-2.5-2c-.5 .5-1 1-1.8 .5-1.5-1-2.8-2.2-3.6-3.6-.4-.8 0-1.3 .5-1.8z" fill="#fff"/><path d="M16 7a6 6 0 0 1 6 6M16 9.5a3.5 3.5 0 0 1 3.5 3.5" fill="none" stroke="#fff" stroke-width="1.2"/></svg>
<svg class="a" style="left:194px;top:1045px" width="36" height="30" viewBox="0 0 36 30"><path d="M1 6h12l2 2h19v20H1z" fill="#f4d57a" stroke="#d2a840"/><rect x="4" y="3" width="10" height="4" fill="#fff"/><rect x="5" y="3.5" width="2" height="2" fill="#2a2"/><rect x="13" y="5" width="3" height="2" fill="#d22"/><rect x="20" y="7" width="3" height="2" fill="#28c"/><path d="M1 12h33v16H1z" fill="#f8e29a"/><path d="M8 18h19v10h-4v-6H12v6H8z" fill="#5aa6de" stroke="#2f7fbf" stroke-width="0.8"/></svg>
<svg class="a" style="left:260px;top:1044px" width="31" height="32" viewBox="0 0 31 32"><circle cx="15.5" cy="16" r="13" fill="#00aff0"/><circle cx="8" cy="8.5" r="6" fill="#00aff0"/><circle cx="23" cy="23.5" r="6" fill="#00aff0"/><text x="8.5" y="24" font-family="Liberation Sans" font-weight="bold" font-size="21" fill="#fff">S</text></svg>
<svg class="a" style="left:322px;top:1044px" width="30" height="32" viewBox="0 0 30 32"><defs><radialGradient id="ffg" cx="75%" cy="15%" r="95%"><stop offset="0" stop-color="#fff44f"/><stop offset="0.45" stop-color="#ff9a1f"/><stop offset="0.8" stop-color="#ff4a2a"/><stop offset="1" stop-color="#e31587"/></radialGradient><radialGradient id="ffb" cx="40%" cy="70%" r="80%"><stop offset="0" stop-color="#3a8ee6"/><stop offset="1" stop-color="#6b2fd0"/></radialGradient></defs><circle cx="15" cy="17" r="13.5" fill="url(#ffg)"/><circle cx="16" cy="15" r="7.5" fill="url(#ffb)"/><path d="M4 11c1 7 5 12 11 12 5 0 8-3 9-6-2 2-5 3-8 2-3-1-5-4-4-7-3 0-6 0-8-1z" fill="#ff7a1a"/><path d="M20 3c4 1 8 5 9 11-2-3-4-5-7-6z" fill="#ffd43a"/></svg>
<svg class="a" style="left:383px;top:1044px" width="34" height="32" viewBox="0 0 34 32"><rect x="13" y="3" width="19" height="26" fill="#fff" stroke="#1f7244"/><path d="M16 8h13M16 12h13M16 16h13M16 20h13M16 24h13M22 5v22" stroke="#1f7244"/><path d="M1 4l17-3v30L1 28z" fill="#1f7244"/><text x="4" y="21" font-family="Liberation Sans" font-weight="bold" font-size="13" fill="#fff">X</text></svg>
<svg class="a" style="left:446px;top:1044px" width="32" height="32" viewBox="0 0 32 32"><rect x="1" y="2" width="24" height="24" fill="#001d34" stroke="#4aa0e0" stroke-width="1.8"/><text x="3.5" y="19" font-family="Liberation Sans" font-weight="bold" font-size="13" fill="#5db7ee">Ps</text><path d="M19 16l6-2 6 2v6c0 4-3 7-6 8-3-1-6-4-6-8z" fill="#2b6fd0"/><path d="M25 14v16c3-1 6-4 6-8v-6z" fill="#f7d534"/><path d="M19 22h12v0c0 .5 0 1-.1 1.5H19.1z" fill="#f7d534"/></svg>
<svg class="a" style="left:504px;top:1044px" width="38" height="32" viewBox="0 0 38 32"><ellipse cx="15" cy="18" rx="13" ry="10" fill="#dfe9f3" stroke="#9ab"/><circle cx="9" cy="15" r="2.3" fill="#e04040"/><circle cx="14" cy="11.5" r="2.3" fill="#40b040"/><circle cx="20" cy="12" r="2.3" fill="#f0c020"/><circle cx="8" cy="21" r="2.3" fill="#4080e0"/><ellipse cx="16" cy="21" rx="2.5" ry="2" fill="#789"/><path d="M14 30L33 5" stroke="#e09030" stroke-width="2.5"/><path d="M31 7l5-6 1 4z" fill="#d8a060"/></svg>
<svg class="a" style="left:566px;top:1043px" width="37" height="34" viewBox="0 0 37 34"><rect x="1" y="1" width="35" height="32" fill="#c81e1e" stroke="#f05050" stroke-width="1.5"/><path d="M8 12h5l2-3h7l2 3h5v14H8z" fill="#fff"/><circle cx="18.5" cy="19" r="4.8" fill="#c81e1e"/><circle cx="18.5" cy="19" r="2" fill="#fff"/><path d="M24 33l12-12v12z" fill="#8a1010" opacity="0.6"/></svg>
<div class="t" style="left:1706px;top:1053px;font-size:12px;color:#fff;font-weight:normal;letter-spacing:-0.3px">RU</div>
<svg class="a" style="left:1737px;top:1057px" width="9" height="5" viewBox="0 0 9 5"><path d="M0 5h9L4.5 0z" fill="#fff"/></svg>
<svg class="a" style="left:1758px;top:1053px" width="17" height="15" viewBox="0 0 17 15"><path d="M1.5 0.5v14" stroke="#fff" stroke-width="1.3"/><path d="M2 1c3-1 5 1 8 0v6c-3 1-5-1-8 0z" fill="#fff"/><path d="M10 2c2 0 3 1 5 1v5c-2 0-3-1-5-1z" fill="#ddd"/><circle cx="11.5" cy="10.5" r="3.8" fill="#d42a2a" stroke="#fff" stroke-width="0.8"/><path d="M9.8 8.8l3.4 3.4M13.2 8.8l-3.4 3.4" stroke="#fff" stroke-width="1.2"/></svg>
<svg class="a" style="left:1782px;top:1052px" width="16" height="16" viewBox="0 0 16 16"><path d="M2 1v5M4 1v5M1 6h4v3H3v6" fill="none" stroke="#fff" stroke-width="1"/><rect x="5" y="4" width="10" height="8" fill="#2c3e2c" stroke="#fff" stroke-width="1.2"/><path d="M7 14.5h7M10.5 12v2.5" stroke="#fff" stroke-width="1.2"/></svg>
<svg class="a" style="left:1812px;top:1053px" width="8" height="15" viewBox="0 0 8 15"><path d="M0 5h3l5-4.5v14L3 10H0z" fill="#fff"/></svg>
<div class="t" style="left:1666px;width:400px;text-align:center;top:1048px;font-size:12px;color:#fff;font-weight:normal;letter-spacing:-0.4px">0:30</div>
<div class="t" style="left:1666px;width:400px;text-align:center;top:1065px;font-size:12px;color:#fff;font-weight:normal;letter-spacing:-0.5px">09.01.2018</div>
<div class="a" style="left:1907px;top:1041px;width:13px;height:39px;border:1px solid rgba(255,255,255,0.4);background:rgba(255,255,255,0.15)"></div>
</body></html>
